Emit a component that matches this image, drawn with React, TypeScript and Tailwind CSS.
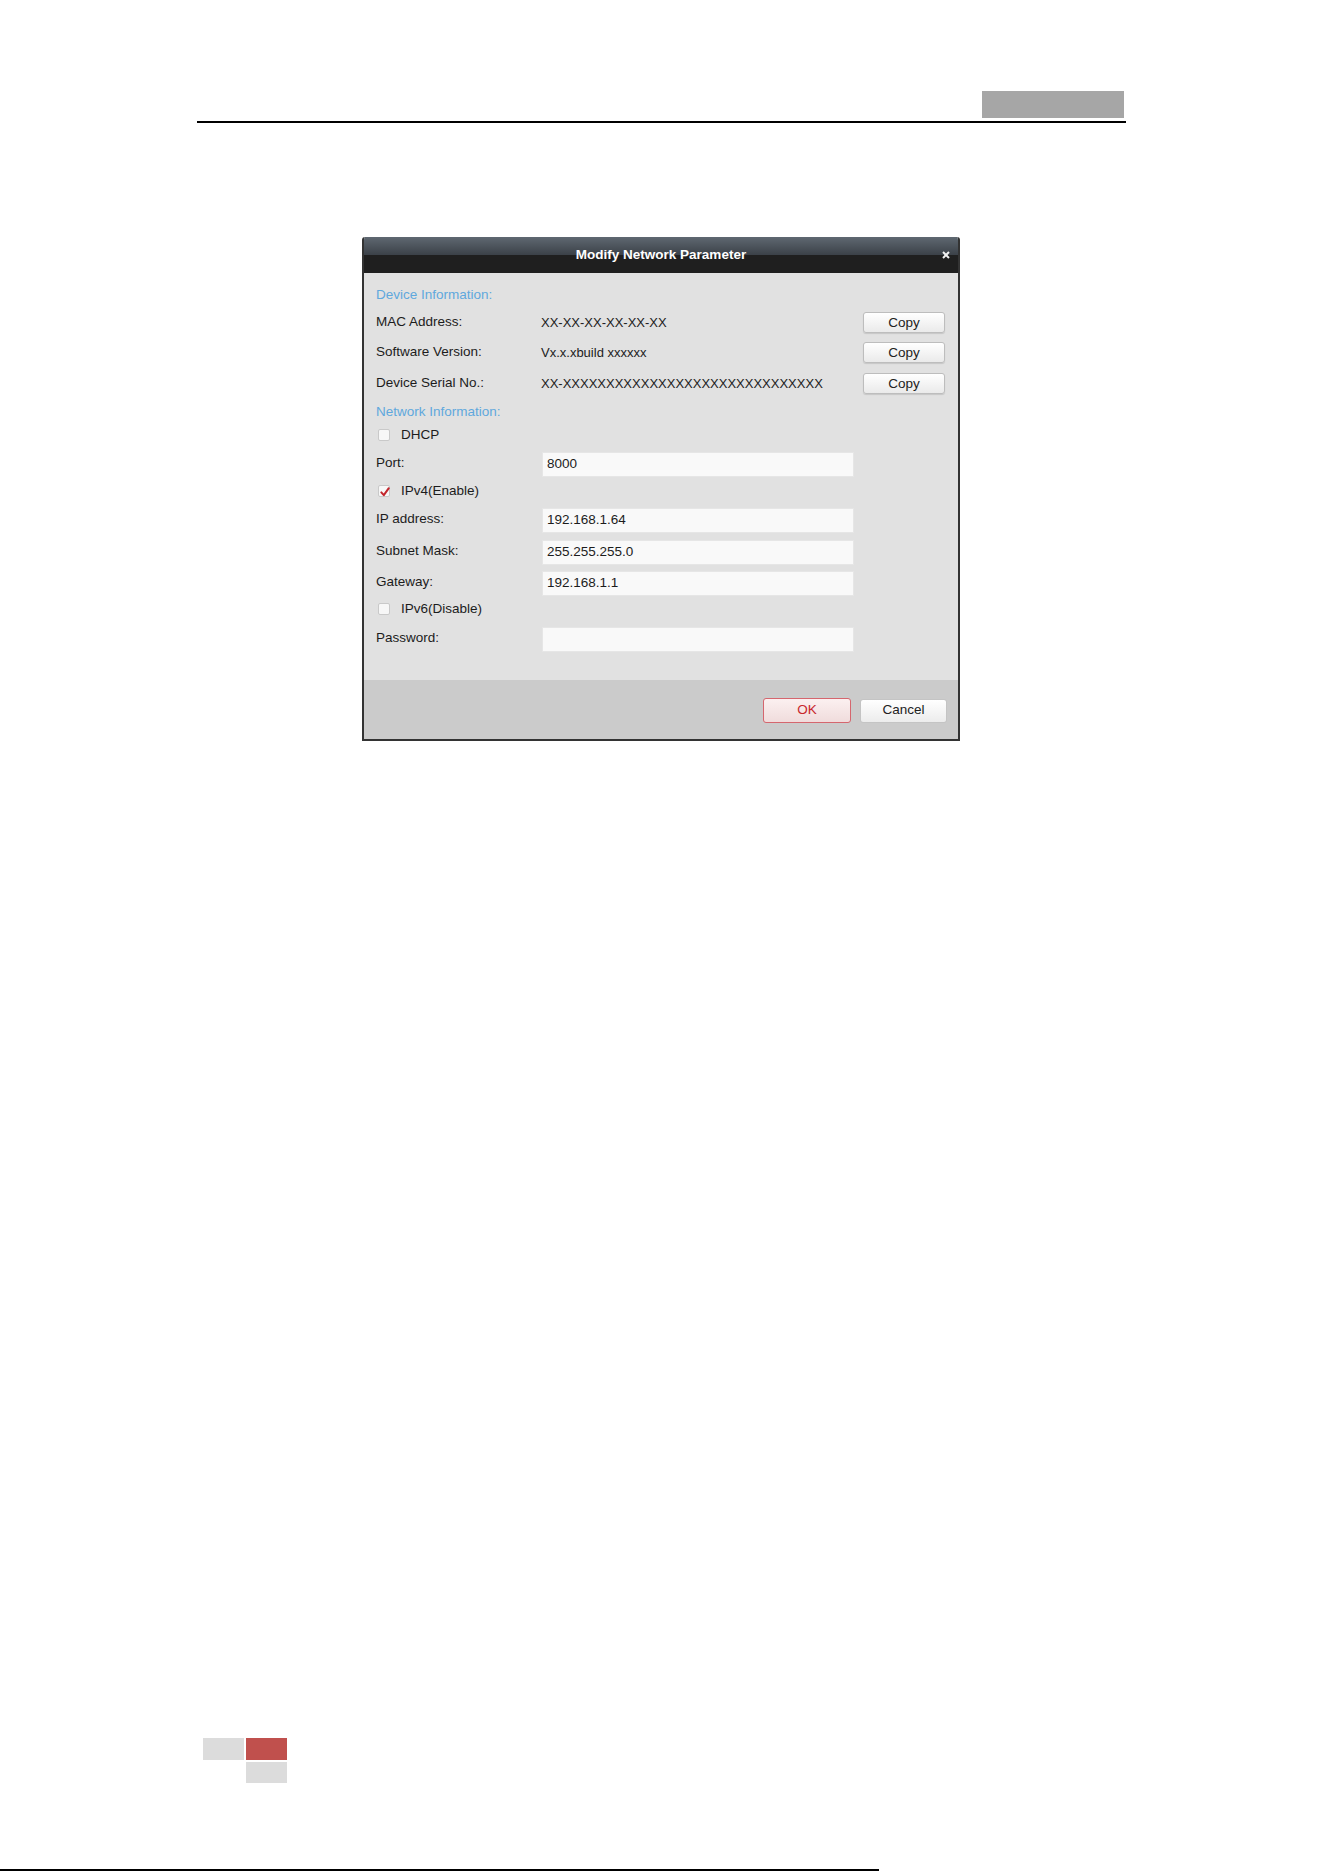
const FONT = "font-['Liberation_Sans',Arial,sans-serif]";

function CopyRow({ label, value, className }: { label: string; value: string; className: string }) {
  return (
    <div className={`flex h-[21px] items-center ${className}`}>
      <div className="w-[165px] text-[13.5px] text-[#1c1c1c]">{label}</div>
      <div className="flex-1 text-[13px] text-[#1c1c1c]">{value}</div>
      <button
        type="button"
        className="h-[21px] w-[82px] rounded-[3px] border border-[#bdbdbd] bg-[linear-gradient(to_bottom,#ffffff,#eaeaea)] text-[13.5px] text-[#222] shadow-[0_1px_1px_rgba(0,0,0,0.12)]"
      >
        Copy
      </button>
    </div>
  );
}

function Field({ label, value, className }: { label: string; value: string; className: string }) {
  return (
    <div className={`flex h-[25px] items-center ${className}`}>
      <div className="w-[166px] pb-[3px] text-[13.5px] text-[#1c1c1c]">{label}</div>
      <div className="flex h-[25px] w-[312px] items-center border border-[#e6e6e6] bg-[#f9f9f9] pl-[4px] text-[13.5px] text-[#1c1c1c]">
        {value}
      </div>
    </div>
  );
}

function Check({ label, checked, className }: { label: string; checked?: boolean; className: string }) {
  return (
    <div className={`flex h-[20px] items-center pl-[2px] ${className}`}>
      <span className="relative flex h-[12px] w-[12px] items-center justify-center rounded-[2px] border border-[#c9c9c9] bg-[#f7f7f7]">
        {checked && (
          <svg width="12" height="12" viewBox="0 0 12 12" className="absolute left-0 top-0">
            <path d="M2.3 6.4 L4.8 9.2 L9.8 2.2" fill="none" stroke="#c3262c" strokeWidth="2" strokeLinecap="round" strokeLinejoin="round" />
          </svg>
        )}
      </span>
      <span className="ml-[11px] text-[13.5px] text-[#1c1c1c]">{label}</span>
    </div>
  );
}

function Heading({ children, className }: { children: string; className: string }) {
  return <div className={`flex h-[20px] items-center text-[13.5px] text-[#5fa8dd] ${className}`}>{children}</div>;
}

export default function App() {
  return (
    <div className={`flex h-[1872px] w-[1324px] flex-col bg-white ${FONT}`}>
      {/* running header */}
      <div className="ml-[197px] mt-[91px] w-[929px]">
        <div className="flex justify-end pr-[2px]">
          <div className="h-[27px] w-[142px] bg-[#a6a6a6]" />
        </div>
        <div className="mt-[3px] h-[2px] bg-black" />
      </div>

      {/* dialog */}
      <div className="ml-[362px] mt-[114px] flex h-[504px] w-[598px] flex-col overflow-hidden rounded-t-[3px] border-x-2 border-b-2 border-[#333]">
        <div className="relative flex h-[36px] items-center justify-center bg-[linear-gradient(to_bottom,#5f6871_0%,#3b4148_50%,#1f1f1f_50%,#1f1f1f_100%)]">
          <span className="text-[13.5px] font-bold text-white">Modify Network Parameter</span>
          <svg width="8" height="8" viewBox="0 0 8 8" className="absolute right-[8px] top-[14px]">
            <path d="M1 1 L7 7 M7 1 L1 7" stroke="#f2f2f2" strokeWidth="2" />
          </svg>
        </div>

        <div className="flex flex-1 flex-col bg-[#e1e1e1] pl-[12px] pr-[13px]">
          <Heading className="mt-[12px]">Device Information:</Heading>
          <CopyRow className="mt-[7px]" label="MAC Address:" value="XX-XX-XX-XX-XX-XX" />
          <CopyRow className="mt-[9px]" label="Software Version:" value="Vx.x.xbuild xxxxxx" />
          <CopyRow className="mt-[10px]" label="Device Serial No.:" value="XX-XXXXXXXXXXXXXXXXXXXXXXXXXXXXXX" />
          <Heading className="mt-[8px]">Network Information:</Heading>
          <Check className="mt-[3px]" label="DHCP" />
          <Field className="mt-[7px]" label="Port:" value="8000" />
          <Check className="mt-[4px]" label="IPv4(Enable)" checked />
          <Field className="mt-[7px]" label="IP address:" value="192.168.1.64" />
          <Field className="mt-[7px]" label="Subnet Mask:" value="255.255.255.0" />
          <Field className="mt-[6px]" label="Gateway:" value="192.168.1.1" />
          <Check className="mt-[3px]" label="IPv6(Disable)" />
          <Field className="mt-[8px]" label="Password:" value="" />
        </div>

        <div className="flex h-[59px] items-center justify-end gap-[9px] bg-[#cbcbcb] pr-[11px] pt-[2px]">
          <button
            type="button"
            className="h-[25px] w-[88px] rounded-[3px] border border-[#d5666e] bg-[linear-gradient(to_bottom,#fbf0f0,#f0dcdc)] text-[13.5px] text-[#c8262c]"
          >
            OK
          </button>
          <button
            type="button"
            className="h-[24px] w-[87px] rounded-[3px] border border-[#c4c4c4] bg-[linear-gradient(to_bottom,#ffffff,#ececec)] text-[13.5px] text-[#222]"
          >
            Cancel
          </button>
        </div>
      </div>

      {/* page footer */}
      <div className="mt-auto">
        <div className="ml-[203px] grid grid-cols-[41px_41px] gap-[2px]">
          <div className="h-[22px] bg-[#dcdcdc]" />
          <div className="h-[22px] bg-[#c0504d]" />
          <div className="h-[21px]" />
          <div className="h-[21px] bg-[#dcdcdc]" />
        </div>
        <div className="mb-[1px] mt-[86px] h-[2px] w-[879px] bg-black" />
      </div>
    </div>
  );
}
